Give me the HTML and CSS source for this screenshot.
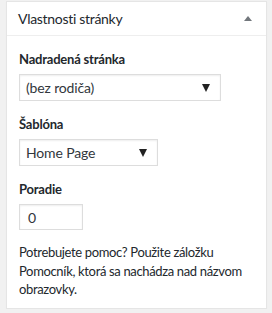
FILE: index.html
```html
<!DOCTYPE html>
<html lang="sk">
<head>
    <meta charset="UTF-8">
    <title>Vlastnosti stránky</title>
    <link rel="stylesheet" href="styles.css">
</head>
<body>
    <div class="postbox">
        <div class="postbox-header">
            <h2 class="postbox-title">Vlastnosti stránky</h2>
            <span class="toggle-arrow"></span>
        </div>
        <div class="inside">
            <div class="field-label">Nadradená stránka</div>
            <div class="fake-select select-wide">
                <span>(bez rodiča)</span>
                <span class="select-arrow"></span>
            </div>

            <div class="field-label">Šablóna</div>
            <div class="fake-select select-narrow">
                <span>Home Page</span>
                <span class="select-arrow"></span>
            </div>

            <div class="field-label">Poradie</div>
            <div class="order-input">0</div>

            <p class="help-text">Potrebujete pomoc? Použite záložku Pomocník, ktorá sa nachádza nad názvom obrazovky.</p>
        </div>
    </div>
</body>
</html>
```

FILE: styles.css
```css
* {
    box-sizing: border-box;
}

body {
    margin: 0;
    padding: 1px 5px 0 6px;
    background: #f1f1f1;
    font-family: Lato, "Open Sans", Arial, sans-serif;
    font-size: 13px;
    color: #23282d;
}

.postbox {
    width: 261px;
    background: #fff;
    border: 1px solid #e5e5e5;
    box-shadow: 0 1px 1px rgba(0, 0, 0, 0.04);
}

.postbox-header {
    height: 34px;
    display: flex;
    align-items: center;
    justify-content: space-between;
    padding: 0 12px 0 11px;
    border-bottom: 1px solid #eee;
}

.postbox-title {
    margin: 0;
    font-size: 14px;
    font-weight: 400;
    letter-spacing: -0.3px;
    color: #23282d;
}

.toggle-arrow {
    width: 0;
    height: 0;
    border-left: 4px solid transparent;
    border-right: 4px solid transparent;
    border-bottom: 5px solid #72777c;
    margin-right: 2px;
}

.inside {
    padding: 14px 12px 9px 12px;
}

.field-label {
    font-weight: 700;
    letter-spacing: -0.2px;
    line-height: 18px;
    margin-bottom: 6px;
}

.fake-select {
    height: 27px;
    display: flex;
    align-items: center;
    justify-content: space-between;
    padding: 0 8px 0 6px;
    border: 1px solid #ddd;
    box-shadow: inset 0 1px 2px rgba(0, 0, 0, 0.07);
    font-size: 14px;
    letter-spacing: -0.15px;
    color: #32373c;
    margin-bottom: 14px;
}

.select-wide {
    width: 202px;
}

.select-narrow {
    width: 139px;
}

.select-arrow {
    width: 0;
    height: 0;
    border-left: 4px solid transparent;
    border-right: 4px solid transparent;
    border-top: 8px solid #222;
    margin-right: 2px;
}

.order-input {
    width: 64px;
    height: 26px;
    border: 1px solid #ddd;
    box-shadow: inset 0 1px 2px rgba(0, 0, 0, 0.07);
    padding: 0 8px;
    display: flex;
    align-items: center;
    font-size: 14px;
    color: #32373c;
}

.help-text {
    margin: 13px 0 0 0;
    line-height: 18.5px;
    letter-spacing: -0.35px;
}
```
